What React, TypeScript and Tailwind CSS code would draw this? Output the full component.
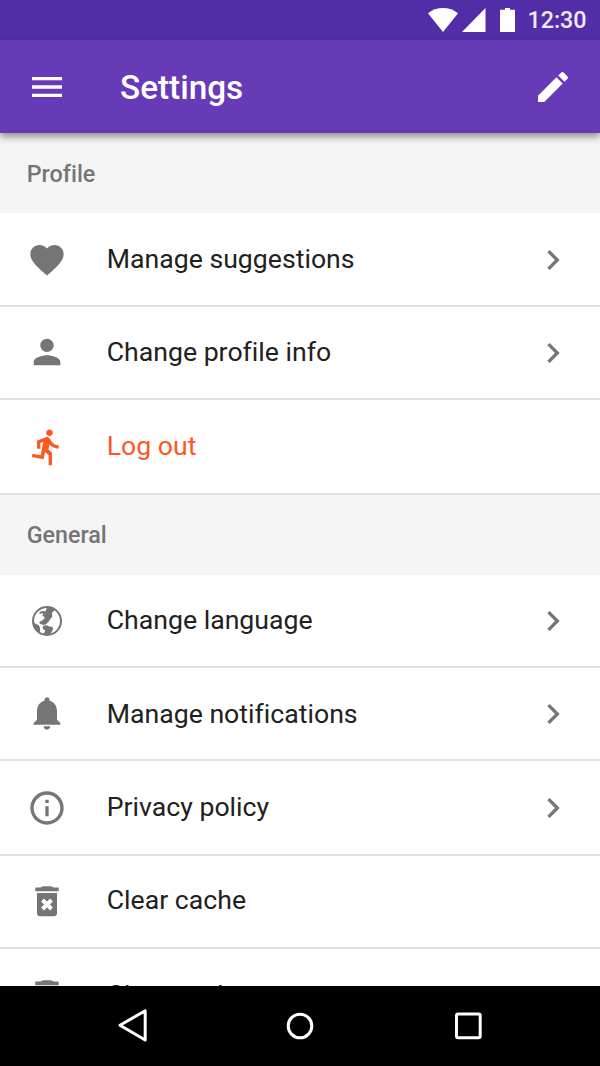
import type { ReactNode } from "react";
import {
  MdChevronRight,
  MdDirectionsRun,
  MdEdit,
  MdFavorite,
  MdInfoOutline,
  MdMenu,
  MdNotifications,
  MdPerson,
} from "react-icons/md";

function GlobeIcon() {
  return (
    <svg width="30" height="30" viewBox="0 0 90 90" fill="currentColor">
      <circle cx="45" cy="45" r="42" fill="none" stroke="currentColor" strokeWidth="6" />
      <path d="M46 3L68 9 65 16 60 21 61 32 55 39 51 46 43 54 36 57 24 54 22 48 33 42 38 37 35 31 40 26 38 20Z" />
      <path d="M20 22L28 15 39 16 42 25 37 31 31 30 34 22 26 23Z" />
      <path d="M3 44L10 53 20 57 24 65 24 82 10 72Z" />
      <path d="M32 61L42 57 50 61 62 63 63 70 57 82 45 88 35 83 40 74 33 69Z" />
    </svg>
  );
}

function TrashIcon() {
  return (
    <svg width="40" height="40" viewBox="0 0 40 40" fill="currentColor">
      <path d="M8.3 5.600h5c1.500-.9 3-1.300 4.700-1.300h4c1.700 0 3.200.4 4.700 1.300h5v3.600H8.300z" />
      <path d="M10 11h20v20a3.300 3.300 0 0 1-3.300 3.300H13.300a3.300 3.300 0 0 1-3.300-3.300z" />
      <path d="M15.500 18l9 9M24.500 18l-9 9" stroke="#fff" strokeWidth="4" />
    </svg>
  );
}

function StatusBar() {
  return (
    <div className="flex h-10 shrink-0 items-center bg-[#512da8] pl-[428px] text-white">
      <svg width="30" height="24" viewBox="0 0 30 24" fill="currentColor">
        <path d="M15 24L0 5.200C4.300 1.800 9.500 0 15 0s10.700 1.800 15 5.200z" />
      </svg>
      <svg className="ml-[3.500px]" width="24" height="24" viewBox="0 0 24 24" fill="currentColor">
        <path d="M0 24L23.500 0v24z" />
      </svg>
      <svg className="ml-[14px]" width="15" height="24" viewBox="0 0 15 24" fill="currentColor">
        <path d="M5 0h5v1.700h5V24H0V1.700h5z" />
      </svg>
      <span className="ml-[13px] pt-px text-[23.300px] font-medium text-white/90">12:30</span>
    </div>
  );
}

function Section({ children, className = "" }: { children: ReactNode; className?: string }) {
  return (
    <h2
      className={`flex h-20 shrink-0 items-center bg-[#f5f5f5] pl-[26.700px] text-[23.300px] font-medium text-[#757575] ${className}`}
    >
      {children}
    </h2>
  );
}

type RowProps = {
  icon: ReactNode;
  label: string;
  height: string;
  chevron?: boolean;
  accent?: boolean;
  iconClass?: string;
  labelClass?: string;
};

function Row({ icon, label, height, chevron, accent, iconClass = "", labelClass = "" }: RowProps) {
  return (
    <div
      className={`flex shrink-0 items-center border-b-2 border-[#e1e1e1] bg-white pl-[26.700px] pr-[26.700px] ${height} ${
        accent ? "text-[#ff5722]" : "text-[#757575]"
      }`}
    >
      <span className={`flex size-10 items-center justify-center ${iconClass}`}>{icon}</span>
      <span className={`ml-10 flex-1 text-[26.670px] ${accent ? "" : "text-[#212121]"} ${labelClass}`}>{label}</span>
      {chevron && <MdChevronRight size={40} className="mt-px" />}
    </div>
  );
}

export default function App() {
  return (
    <div className="flex h-[1066px] w-[600px] flex-col overflow-hidden bg-white font-['Roboto',sans-serif] [font-variant-ligatures:none]">
      <StatusBar />
      <header className="relative z-10 flex h-[93px] shrink-0 items-center bg-[#673ab7] pl-[26.700px] pr-[26.700px] text-white shadow-[0_4px_7px_rgba(0,0,0,0.4)]">
        <MdMenu size={40} />
        <h1 className="ml-[53.300px] flex-1 pt-0.5 text-[33.300px] font-medium">Settings</h1>
        <MdEdit size={40} />
      </header>
      <main className="flex min-h-0 flex-1 flex-col overflow-hidden">
        <Section className="pt-0.5">Profile</Section>
        <Row height="h-[94px]" iconClass="mt-0.5" icon={<MdFavorite size={40} />} label="Manage suggestions" chevron />
        <Row height="h-[93px]" iconClass="mb-0.5" labelClass="pb-0.5" icon={<MdPerson size={40} />} label="Change profile info" chevron />
        <Row height="h-[95px]" labelClass="pb-0.5" icon={<MdDirectionsRun size={40} />} label="Log out" accent />
        <Section>General</Section>
        <Row height="h-[93px]" iconClass="mt-px" labelClass="pb-px" icon={<GlobeIcon />} label="Change language" chevron />
        <Row height="h-[93px]" iconClass="mb-0.5" icon={<MdNotifications size={40} />} label="Manage notifications" chevron />
        <Row height="h-[95px]" labelClass="pb-0.5" icon={<MdInfoOutline size={40} />} label="Privacy policy" chevron />
        <Row height="h-[93px]" labelClass="pb-[3px]" icon={<TrashIcon />} label="Clear cache" />
        <Row height="h-[93px]" iconClass="mt-0.5" labelClass="pt-px" icon={<TrashIcon />} label="Clear cache" />
      </main>
      <nav className="flex h-20 shrink-0 items-center justify-between bg-black px-28 text-white">
        <svg width="40" height="40" viewBox="0 0 40 40" fill="none" stroke="currentColor" strokeWidth="3" strokeLinejoin="round">
          <path d="M33.200 4.800v29.200L8 19.200z" />
        </svg>
        <svg width="40" height="40" viewBox="0 0 40 40" fill="none" stroke="currentColor" strokeWidth="3">
          <circle cx="20" cy="20" r="11.800" />
        </svg>
        <svg width="40" height="40" viewBox="0 0 40 40" fill="none" stroke="currentColor" strokeWidth="3">
          <rect x="8.500" y="8" width="23.700" height="23.700" rx="1.500" />
        </svg>
      </nav>
    </div>
  );
}
